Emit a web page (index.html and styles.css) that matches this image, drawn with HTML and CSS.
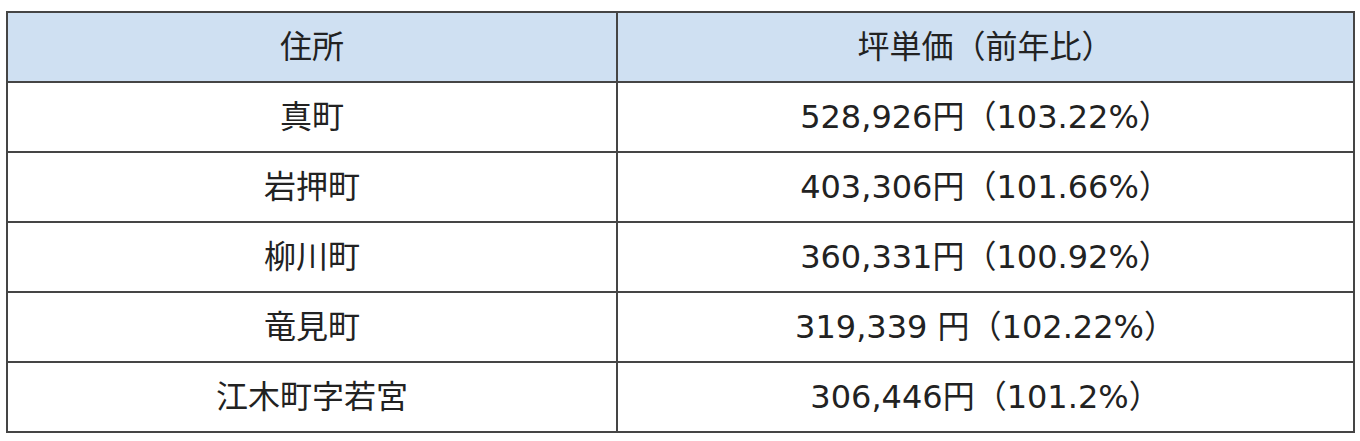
FILE: index.html
```html
<!DOCTYPE html>
<html lang="ja">
<head>
<meta charset="utf-8">
<title>坪単価</title>
<link rel="stylesheet" href="styles.css">
</head>
<body>
<table class="price-table">
  <thead>
    <tr>
      <th class="col-addr">住所</th>
      <th class="col-price">坪単価（前年比）</th>
    </tr>
  </thead>
  <tbody>
    <tr><td>真町</td><td>528,926円（103.22%）</td></tr>
    <tr><td>岩押町</td><td>403,306円（101.66%）</td></tr>
    <tr><td>柳川町</td><td>360,331円（100.92%）</td></tr>
    <tr><td>竜見町</td><td>319,339 円（102.22%）</td></tr>
    <tr><td>江木町字若宮</td><td>306,446円（101.2%）</td></tr>
  </tbody>
</table>
</body>
</html>
```

FILE: styles.css
```css
html, body {
  margin: 0;
  padding: 0;
  background: #ffffff;
}

body {
  padding: 11px 0 0 6px;
  font-family: "DejaVu Sans", "Noto Sans CJK JP", sans-serif;
  color: #222222;
}

.price-table {
  border-collapse: collapse;
  width: 1349px;
  table-layout: fixed;
  font-size: 32px;
}

.price-table th,
.price-table td {
  border: 2px solid #454545;
  height: 68px;
  padding: 0;
  text-align: center;
  vertical-align: middle;
  font-weight: normal;
  line-height: 1;
}

.price-table thead th {
  background: #cfe0f2;
}

.col-addr {
  width: 608px;
}
```
